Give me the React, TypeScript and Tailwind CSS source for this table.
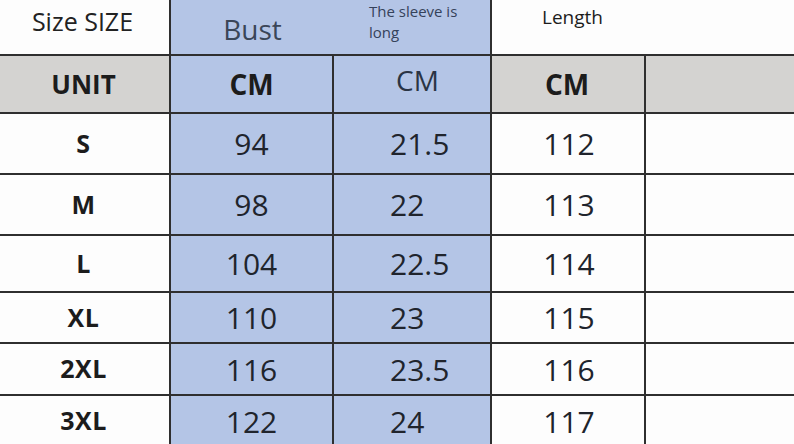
const rows = [
  { size: "S", bust: "94", sleeve: "21.5", length: "112", h: "h-[59px]" },
  { size: "M", bust: "98", sleeve: "22", length: "113", h: "h-[59px]" },
  { size: "L", bust: "104", sleeve: "22.5", length: "114", h: "h-[55px]" },
  { size: "XL", bust: "110", sleeve: "23", length: "115", h: "h-[49px]" },
  { size: "2XL", bust: "116", sleeve: "23.5", length: "116", h: "h-[50px]" },
  { size: "3XL", bust: "122", sleeve: "24", length: "117", h: "h-[50px]" },
];

export default function App() {
  return (
    <div
      className="w-[794px] h-[444px] overflow-hidden bg-[#2f2f2f] text-[#1c1c1c]"
      style={{ fontFamily: '"Open Sans", "Noto Sans", sans-serif' }}
    >
      <div className="grid grid-cols-[169px_161px_156px_152px_148px] gap-[2px]">
        {/* header row */}
        <div className="h-[54px] bg-[#fdfdfd] flex items-start justify-center pt-[3px] pr-[4px] text-[25px] text-[#222]">
          Size SIZE
        </div>
        <div className="col-span-2 h-[54px] bg-[#b4c5e6] flex">
          <div className="w-[163px] flex justify-center pt-[15px] text-[28px] text-[#3a4658] leading-none">
            Bust
          </div>
          <div className="pl-[35px] pt-[1px] text-[15px] leading-[21px] text-[#35425a] font-medium">
            The sleeve is
            <br />
            long
          </div>
        </div>
        <div className="col-span-2 h-[54px] bg-[#fdfdfd] pl-[50px] pt-[3px] text-[19px] text-[#1c1c1c]">
          Length
        </div>

        {/* unit row */}
        <div className="h-[56px] bg-[#d4d3d1] flex items-center justify-center font-bold text-[26px] pr-[2px]">
          UNIT
        </div>
        <div className="h-[56px] bg-[#b4c5e6] flex items-center justify-center font-bold text-[28px]">
          CM
        </div>
        <div className="h-[56px] bg-[#b4c5e6] flex items-center pl-[62px] pb-[8px] text-[28px] text-[#2a3444]">
          CM
        </div>
        <div className="h-[56px] bg-[#d4d3d1] flex items-center justify-center font-bold text-[28px] pr-[2px]">
          CM
        </div>
        <div className="h-[56px] bg-[#d4d3d1]" />

        {rows.map((r) => (
          <>
            <div
              key={r.size + "a"}
              className={`${r.h} bg-[#fdfdfd] flex items-center justify-center font-bold text-[25px] tracking-[0.5px] pr-[2px]`}
            >
              {r.size}
            </div>
            <div
              key={r.size + "b"}
              className={`${r.h} bg-[#b4c5e6] flex items-center justify-center text-[30px] text-[#20242c]`}
            >
              {r.bust}
            </div>
            <div
              key={r.size + "c"}
              className={`${r.h} bg-[#b4c5e6] flex items-center pl-[56px] text-[30px] text-[#20242c]`}
            >
              {r.sleeve}
            </div>
            <div
              key={r.size + "d"}
              className={`${r.h} bg-[#fdfdfd] flex items-center justify-center pl-[2px] text-[30px] text-[#20242c]`}
            >
              {r.length}
            </div>
            <div key={r.size + "e"} className={`${r.h} bg-[#fdfdfd]`} />
          </>
        ))}
      </div>
    </div>
  );
}
